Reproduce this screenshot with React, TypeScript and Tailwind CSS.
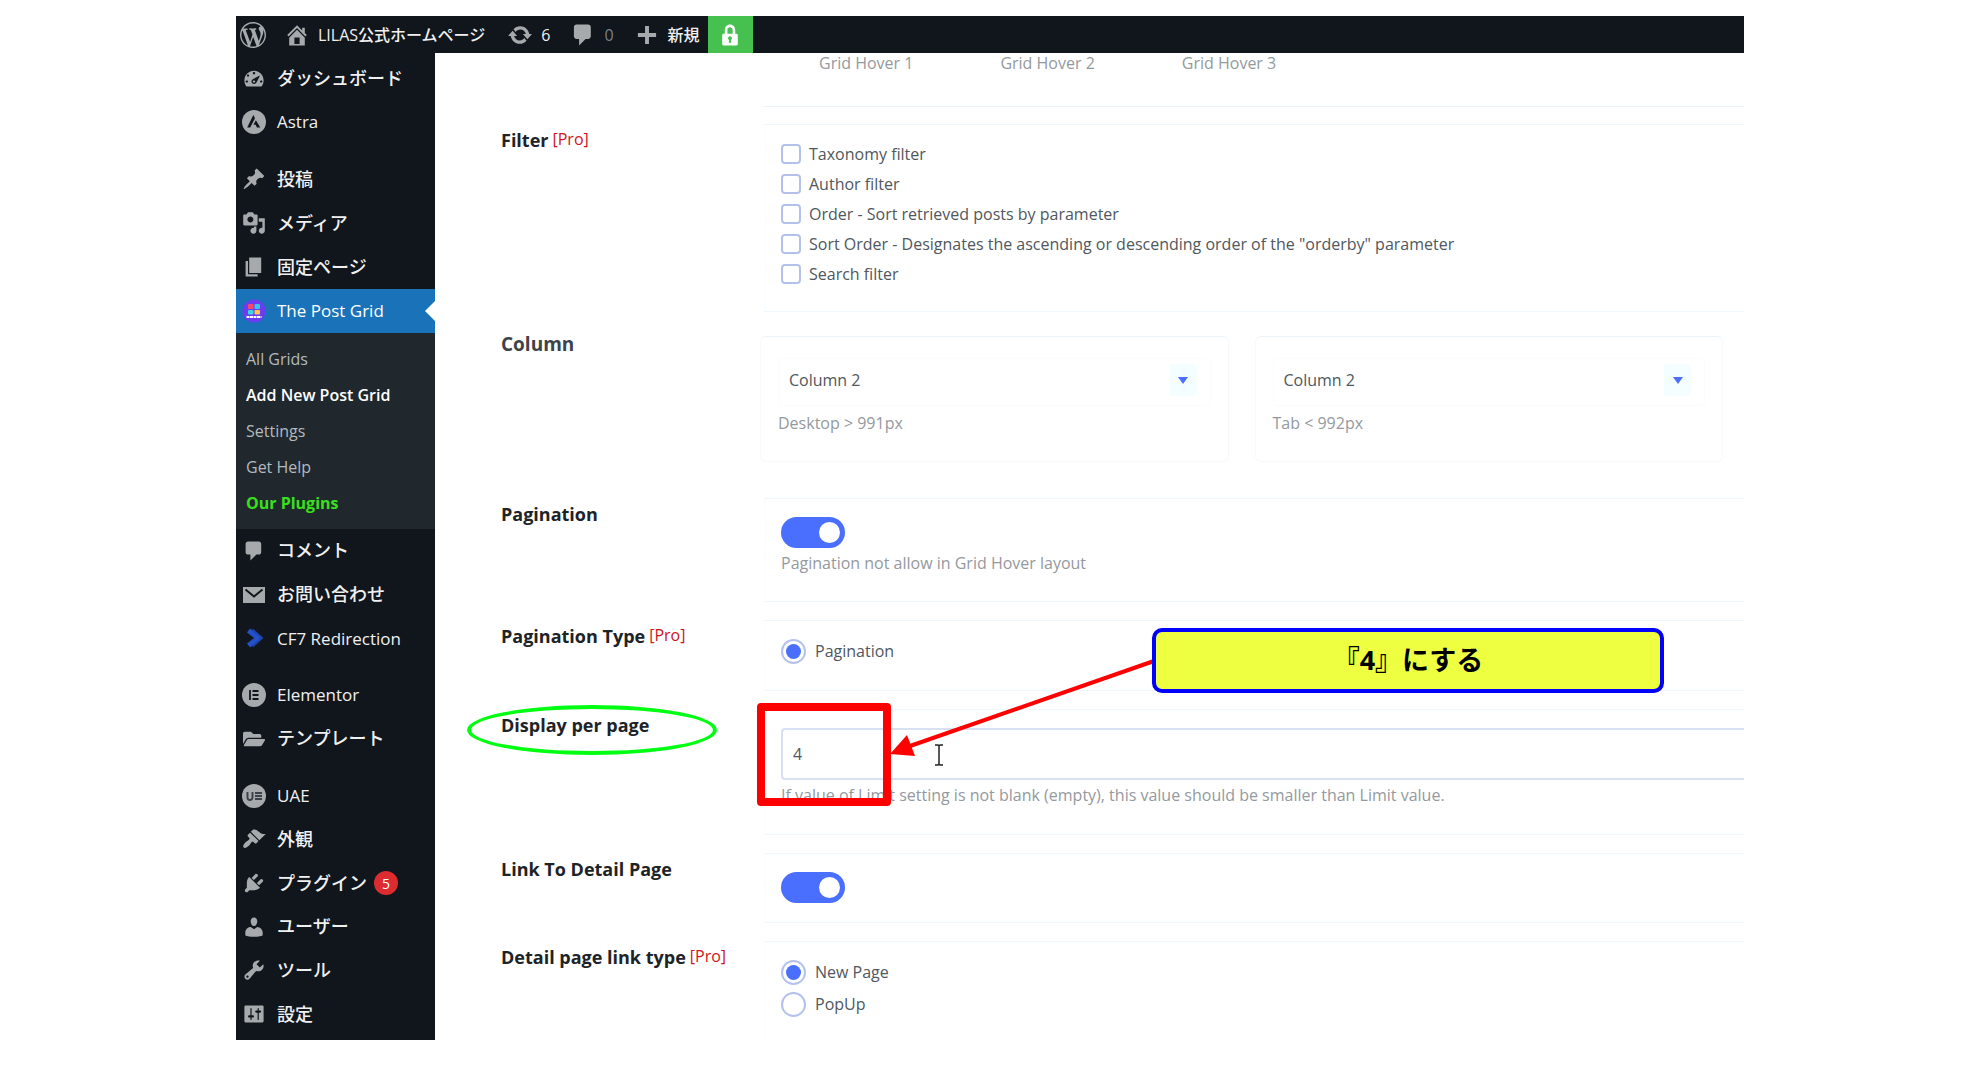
import React from 'react';
import { useState } from 'react';
import { FaFolderOpen } from 'react-icons/fa';

const paths = {
  wordpress: 'M20 10c0-5.51-4.49-10-10-10C4.48 0 0 4.49 0 10c0 5.52 4.48 10 10 10 5.51 0 10-4.48 10-10zM7.78 15.37L4.37 6.22c.55-.02 1.17-.08 1.17-.08.5-.06.44-1.13-.06-1.11 0 0-1.45.11-2.37.11-.18 0-.37 0-.58-.01C4.12 2.69 6.87 1.11 10 1.11c2.33 0 4.45.87 6.05 2.34-.68-.11-1.65.39-1.65 1.58 0 .74.45 1.36.9 2.1.35.61.55 1.36.55 2.46 0 1.49-1.4 5-1.4 5l-3.03-8.37c.54-.02.82-.17.82-.17.5-.05.44-1.25-.06-1.22 0 0-1.44.12-2.38.12-.87 0-2.33-.12-2.33-.12-.5-.03-.56 1.2-.06 1.22l.92.08 1.26 3.41zM17.41 10c.24-.64.74-1.87.43-4.25.7 1.29 1.05 2.71 1.05 4.25 0 3.29-1.73 6.24-4.4 7.78.97-2.59 1.94-5.2 2.92-7.78zM6.1 18.09C3.12 16.65 1.11 13.53 1.11 10c0-1.3.23-2.48.72-3.59C3.25 10.3 4.67 14.2 6.1 18.09zm4.03-6.63l2.58 6.98c-.86.29-1.76.45-2.71.45-.79 0-1.57-.11-2.29-.33.81-2.38 1.62-4.74 2.42-7.1z',
  home: 'M16 8.5l1.53 1.53-1.06 1.06L10 4.6l-6.47 6.49-1.06-1.06L10 2.5l4 4v-2h2v4zm-6-2.46l6 5.99V18H4v-5.97zM12 17v-5H8v5h4z',
  update: 'M10.2 3.28c3.53 0 6.43 2.61 6.92 6h2.08l-3.5 4-3.5-4h2.32c-.45-1.97-2.21-3.45-4.32-3.45-1.45 0-2.73.71-3.54 1.78L4.95 5.66C6.23 4.2 8.11 3.28 10.2 3.28zm-.4 13.44c-3.52 0-6.43-2.61-6.92-6H.8l3.5-4c1.17 1.33 2.33 2.67 3.5 4H5.48c.45 1.97 2.21 3.45 4.32 3.45 1.45 0 2.73-.71 3.54-1.78l1.71 1.95c-1.28 1.46-3.15 2.38-5.25 2.38z',
  comment: 'M5 2h9c1.1 0 2 .9 2 2v7c0 1.1-.9 2-2 2h-2l-5 5v-5H5c-1.1 0-2-.9-2-2V4c0-1.1.9-2 2-2z',
  plus: 'M17 8.5v3h-5.5V17h-3v-5.5H3v-3h5.500V3h3v5.500z',
  lock: 'M14 9h1c.55 0 1 .45 1 1v7c0 .55-.45 1-1 1H5c-.55 0-1-.45-1-1v-7c0-.55.45-1 1-1h1V6c0-2.21 1.79-4 4-4s4 1.79 4 4v3zm-2 0V6c0-1.1-.9-2-2-2s-2 .9-2 2v3h4zm-1 7l-.36-2.150c.51-.24.86-.75.86-1.350 0-.83-.67-1.500-1.500-1.500s-1.500.67-1.500 1.500c0 .6.35 1.110.86 1.350L9 16h2z',
  dashboard: 'M3.76 17h12.48c1.1-1.37 1.76-3.11 1.76-5 0-4.42-3.58-8-8-8s-8 3.58-8 8c0 1.89.66 3.63 1.76 5zM9 6c0-.55.45-1 1-1s1 .45 1 1c0 .56-.45 1-1 1s-1-.44-1-1zM4 8c0-.55.45-1 1-1s1 .45 1 1c0 .56-.45 1-1 1s-1-.44-1-1zm4.52 3.4c.84-.83 6.51-3.5 6.51-3.5s-2.66 5.68-3.49 6.51c-.84.84-2.18.84-3.02 0-.83-.83-.83-2.18 0-3.01zM3 13c0-.55.45-1 1-1s1 .45 1 1c0 .56-.45 1-1 1s-1-.44-1-1zm6 0c0 .55.45 1 1 1s1-.45 1-1c0-.56-.45-1-1-1s-1 .44-1 1zm6 0c0-.55.45-1 1-1s1 .45 1 1c0 .56-.45 1-1 1s-1-.44-1-1z',
  post: 'M10.44 3.02l1.82-1.82 6.36 6.35-1.83 1.82c-1.05-.68-2.48-.57-3.41.36l-.75.75c-.92.93-1.04 2.35-.35 3.41l-1.83 1.82-2.41-2.41-2.8 2.79c-.42.42-3.38 2.71-3.8 2.29s1.86-3.39 2.28-3.81l2.79-2.79L4.1 9.36l1.83-1.82c1.05.69 2.48.57 3.4-.36l.75-.75c.93-.92 1.05-2.35.36-3.41z',
  media: 'M13 11V4c0-.55-.45-1-1-1h-1.67L9 1H5L3.67 3H2c-.55 0-1 .45-1 1v7c0 .55.45 1 1 1h10c.55 0 1-.45 1-1zM7 4.5c1.38 0 2.5 1.12 2.5 2.5S8.38 9.5 7 9.5 4.5 8.38 4.5 7 5.62 4.5 7 4.5zM14 6h5v10.5c0 1.38-1.12 2.5-2.5 2.5S14 17.88 14 16.5s1.12-2.5 2.5-2.5c.17 0 .34.02.5.05V9h-3V6zm-4 8.05V13h2v3.5c0 1.38-1.12 2.5-2.5 2.5S7 17.88 7 16.5 8.12 14 9.5 14c.17 0 .34.02.5.05z',
  page: 'M6 15V2h10v13H6zm-1 1h8v2H3V5h2v11z',
  appearance: 'M14.48 11.06L7.41 3.99l1.5-1.5c.5-.56 2.3-.47 3.51.32 1.21.8 1.43 1.28 2.91 2.1 1.18.64 2.45 1.26 4.45.85zm-.71.71L6.7 4.7 4.93 6.47c-.39.39-.39 1.02 0 1.41l1.06 1.06c.39.39.39 1.03 0 1.42-.6.6-1.43 1.11-2.21 1.69-.35.26-.7.53-1.01.84C1.43 14.23.4 16.08 1.4 17.07c.99 1 2.84-.03 4.18-1.36.31-.31.58-.66.85-1.02.57-.78 1.08-1.61 1.69-2.21.39-.39 1.02-.39 1.41 0l1.06 1.06c.39.39 1.02.39 1.41 0z',
  plugins: 'M13.11 4.36L9.87 7.6 8 5.73l3.24-3.24c.35-.34 1.05-.2 1.56.32.52.51.66 1.21.31 1.55zm-8 1.77l.91-1.12 9.01 9.01-1.19.84c-.71.71-2.63 1.16-3.82 1.16H6.14L4.9 17.26c-.59.59-1.54.59-2.12 0-.59-.58-.59-1.53 0-2.12l1.24-1.24v-3.88c0-1.13.4-3.19 1.09-3.89zm7.26 3.97l3.24-3.24c.34-.35 1.04-.21 1.55.31.52.51.66 1.21.31 1.55l-3.24 3.25z',
  users: 'M10 9.25c-2.27 0-2.73-3.44-2.73-3.44C7 4.02 7.82 2 9.97 2c2.16 0 2.98 2.02 2.71 3.81 0 0-.41 3.44-2.68 3.44zm0 2.57L12.72 10c2.39 0 4.52 2.33 4.52 4.53v2.49s-3.65 1.13-7.24 1.13c-3.65 0-7.24-1.13-7.24-1.13v-2.49c0-2.25 1.94-4.48 4.47-4.48z',
  tools: 'M16.68 9.77c-1.34 1.34-3.3 1.67-4.95.99l-5.41 6.52c-.99.99-2.59.99-3.58 0s-.99-2.59 0-3.57l6.52-5.42c-.68-1.65-.35-3.61.99-4.95 1.28-1.28 3.12-1.62 4.72-1.06l-2.89 2.89 2.82 2.82 2.86-2.87c.53 1.58.18 3.39-1.08 4.65zM3.81 16.21c.4.39 1.04.39 1.43 0 .4-.4.4-1.04 0-1.43-.39-.4-1.03-.4-1.43 0-.39.39-.39 1.03 0 1.43z',
  settings: 'M18 16V4c0-.55-.45-1-1-1H3c-.55 0-1 .45-1 1v12c0 .55.45 1 1 1h14c.55 0 1-.45 1-1zM8 11h1c.55 0 1 .45 1 1s-.45 1-1 1H8v1.5c0 .28-.22.5-.5.5s-.5-.22-.5-.5V13H6c-.55 0-1-.45-1-1s.45-1 1-1h1V5.5c0-.28.22-.5.5-.5s.5.22.5.5V11zm5-2h-1c-.55 0-1-.45-1-1s.45-1 1-1h1V5.5c0-.28.22-.5.5-.5s.5.22.5.5V7h1c.55 0 1 .45 1 1s-.45 1-1 1h-1v5.5c0 .28-.22.5-.5.5s-.5-.22-.5-.5V9z',
};

function DashIcon({name, className = 'size-6'}: {name: keyof typeof paths, className?: string}) {
  return (
    <svg viewBox="0 0 20 20" fill="currentColor" className={className} aria-hidden="true">
      <path fillRule="evenodd" d={paths[name]} />
    </svg>
  );
}

function AstraIcon() {
  return (
    <svg viewBox="0 0 24 24" className="size-6" aria-hidden="true">
      <circle cx="12" cy="12" r="12" fill="currentColor" />
      <path d="M11.300 5 5.200 17.500h3L13 8.300zM13.900 10.200l-2.400 4.600h2.200l1.200 2.700h3.400z" fill="#10161c" />
    </svg>
  );
}

function PostGridIcon() {
  return (
    <svg viewBox="0 0 24 24" className="size-6" aria-hidden="true">
      <circle cx="12" cy="12" r="11.500" fill="#6a3df0" />
      <rect x="6" y="5" width="5.500" height="5" rx="1" fill="#f8486b" />
      <rect x="12.500" y="5" width="5.500" height="5" rx="1" fill="#39c6ea" />
      <rect x="6" y="11" width="5.500" height="4.500" rx="1" fill="#3fd6e4" />
      <rect x="12.500" y="11" width="5.500" height="4.500" rx="1" fill="#ffc35a" />
      <path d="M4.500 18h15" stroke="#fff" strokeWidth="2" strokeDasharray="3 .5" />
    </svg>
  );
}

function MailIcon() {
  return (
    <svg viewBox="0 0 24 24" className="size-6" aria-hidden="true">
      <rect x="1" y="4" width="22" height="16" fill="currentColor" />
      <path d="m3.500 6.500 8.500 7 8.500-7" fill="none" stroke="#10161c" strokeWidth="2" />
    </svg>
  );
}

function RedirectIcon() {
  return (
    <svg viewBox="0 0 24 24" className="size-6" aria-hidden="true">
      <path d="m6.500 4.500 9.500 7.500-9.500 7.500" fill="none" stroke="#2450c8" strokeWidth="5" strokeLinejoin="round" />
      <path d="M10.500 3.500 20 12l-9.500 8.500" fill="none" stroke="#1d43ad" strokeWidth="2" />
    </svg>
  );
}

function ElementorIcon() {
  return (
    <svg viewBox="0 0 24 24" className="size-6" aria-hidden="true">
      <circle cx="12" cy="12" r="12" fill="currentColor" />
      <path d="M8 7v10M10.500 8h6M10.500 12h6M10.500 16h6" stroke="#10161c" strokeWidth="1.800" />
    </svg>
  );
}

function UaeIcon() {
  return (
    <svg viewBox="0 0 24 24" className="size-6" aria-hidden="true">
      <circle cx="12" cy="12" r="12" fill="currentColor" />
      <path d="M5.500 8v5.500a2.500 2.500 0 0 0 5 0V8M13 9h7M13 12h7M13 15h7" fill="none" stroke="#3a4148" strokeWidth="1.900" />
    </svg>
  );
}

type MenuItemProps = {
  icon: React.ReactNode;
  label: string;
  active?: boolean;
  badge?: string;
  grow?: boolean;
}

function MenuItem({icon, label, active, badge, grow}: MenuItemProps) {
  const latin = /^[\x20-\x7e]+$/.test(label);
  return (
    <a
      href="#"
      className={`relative flex items-center gap-[11px] pl-[6px] ${grow ? 'flex-1' : 'h-11'} ${active ? 'bg-[#1a72b8] text-white' : 'text-[#f0f0f1]'}`}
    >
      <span className={`flex size-6 shrink-0 items-center justify-center ${active ? '' : 'text-[#a7aaad]'}`}>{icon}</span>
      <span className={latin ? 'text-[17px]' : 'text-[18px] font-medium'}>{label}</span>
      {badge && (
        <span className="-ml-1 flex size-6 items-center justify-center rounded-full bg-[#dd2c30] text-[14px] text-white">{badge}</span>
      )}
      {active && (
        <span className="absolute right-0 top-3 border-y-10 border-r-10 border-y-transparent border-r-white" />
      )}
    </a>
  );
}

function Sidebar() {
  return (
    <nav className="flex w-[199px] shrink-0 flex-col bg-[#10161c] pb-1 pt-[3px]">
      <MenuItem icon={<DashIcon name="dashboard" />} label="ダッシュボード" />
      <MenuItem icon={<AstraIcon />} label="Astra" />
      <div className="h-[13px]" />
      <MenuItem icon={<DashIcon name="post" />} label="投稿" />
      <MenuItem icon={<DashIcon name="media" />} label="メディア" />
      <MenuItem icon={<DashIcon name="page" />} label="固定ページ" />
      <MenuItem icon={<PostGridIcon />} label="The Post Grid" active />
      <div className="flex flex-col bg-[#20282e] py-2 pl-[10px] text-[16px] leading-9 text-[#b4b9be]">
        <a href="#">All Grids</a>
        <a href="#" className="font-semibold text-white">Add New Post Grid</a>
        <a href="#">Settings</a>
        <a href="#">Get Help</a>
        <a href="#" className="font-bold text-[#39e01c]">Our Plugins</a>
      </div>
      <MenuItem grow icon={<DashIcon name="comment" />} label="コメント" />
      <MenuItem grow icon={<MailIcon />} label="お問い合わせ" />
      <MenuItem grow icon={<RedirectIcon />} label="CF7 Redirection" />
      <div className="h-[13px]" />
      <MenuItem grow icon={<ElementorIcon />} label="Elementor" />
      <MenuItem grow icon={<FaFolderOpen className="size-[22px]" />} label="テンプレート" />
      <div className="h-[13px]" />
      <MenuItem grow icon={<UaeIcon />} label="UAE" />
      <MenuItem grow icon={<DashIcon name="appearance" />} label="外観" />
      <MenuItem grow icon={<DashIcon name="plugins" />} label="プラグイン" badge="5" />
      <MenuItem grow icon={<DashIcon name="users" />} label="ユーザー" />
      <MenuItem grow icon={<DashIcon name="tools" />} label="ツール" />
      <MenuItem grow icon={<DashIcon name="settings" />} label="設定" />
    </nav>
  );
}

function AdminBar() {
  return (
    <header className="flex h-[37px] shrink-0 items-center bg-[#10161c] pl-1 text-[16px] leading-9 text-[#f0f0f1]">
      <a href="#" aria-label="WordPress" className="text-[#a7aaad]"><DashIcon name="wordpress" className="size-[26px]" /></a>
      <a href="#" className="ml-[18px] flex items-center gap-2">
        <DashIcon name="home" className="size-[26px] text-[#a7aaad]" />
        <span className="font-medium">LILAS公式ホームページ</span>
      </a>
      <a href="#" className="ml-[22px] flex items-center gap-2">
        <DashIcon name="update" className="size-[26px] text-[#a7aaad]" />6
      </a>
      <a href="#" className="ml-5 flex items-center gap-2 text-[#7c8186]">
        <DashIcon name="comment" className="size-[26px] text-[#a7aaad]" />0
      </a>
      <a href="#" className="ml-5 flex items-center gap-2">
        <DashIcon name="plus" className="size-[26px] text-[#a7aaad]" />
        <span className="font-medium">新規</span>
      </a>
      <a href="#" aria-label="SSL" className="ml-2 flex h-full w-[45px] items-center justify-center bg-[#46c04e] text-white">
        <DashIcon name="lock" className="size-[26px]" />
      </a>
    </header>
  );
}

type RowProps = {
  label: string;
  pro?: boolean;
  htmlFor?: string;
  children: React.ReactNode;
}

function Row({label, pro, htmlFor, children}: RowProps) {
  return (
    <div className="relative mb-[18px] flex">
      <div className="w-[263px] shrink-0 whitespace-nowrap text-[18px] font-bold leading-8 text-[#1d2327]">
        <label htmlFor={htmlFor}>{label}</label>
        {pro && <sup className="top-[-2px] ml-1 text-[16px] font-normal leading-none text-[#d0141c]">[Pro]</sup>}
      </div>
      <div className="min-w-0 flex-1 border-y border-l border-y-[#eef7fc] border-l-[#f8fcfe] pl-4">{children}</div>
    </div>
  );
}

function Toggle({id}: {id: string}) {
  const [on, setOn] = useState(true);
  return (
    <span className="relative mt-[18px] flex h-[31px] w-16">
      <input
        id={id}
        type="checkbox"
        role="switch"
        checked={on}
        onChange={(e) => setOn(e.target.checked)}
        className="peer h-full w-full appearance-none rounded-full bg-gray-300 checked:bg-[#4a6fff]"
      />
      <span className="pointer-events-none absolute left-1 top-[5px] size-[21px] rounded-full bg-white peer-checked:left-[38px]" />
    </span>
  );
}

function Radio({name, label, checked}: {name: string, label: string, checked?: boolean}) {
  return (
    <label className="flex h-8 items-center gap-[9px] text-[16px] text-[#50575e]">
      <input
        type="radio"
        name={name}
        defaultChecked={checked}
        className="size-[25px] appearance-none rounded-full border-2 border-[#b3c1ec] bg-white bg-clip-content p-[3px] checked:bg-[#4a6fff]"
      />
      {label}
    </label>
  );
}

function ColumnCard({id, hint}: {id: string, hint: string}) {
  return (
    <div className="h-[126px] flex-1 rounded-md border border-[#f6fafd] border-t-[#eaf3fa] px-[17px] pt-[21px]">
      <div className="relative">
        <select
          id={id}
          defaultValue="2"
          className="h-12 w-full appearance-none rounded border border-[#f9fdfe] bg-white pb-1 pl-[10px] text-[16px] text-[#50575e]"
        >
          <option value="1">Column 1</option>
          <option value="2">Column 2</option>
          <option value="3">Column 3</option>
        </select>
        <span className="pointer-events-none absolute right-[14px] top-[6px] flex h-8 w-[27px] items-center justify-center rounded bg-[#f4fdff]">
          <span className="border-x-5 border-t-7 border-x-transparent border-t-[#4a6fff]" />
        </span>
      </div>
      <label htmlFor={id} className="mt-[7px] block text-[16px] leading-5 text-[#94999e]">{hint}</label>
    </div>
  );
}

const filters = [
  'Taxonomy filter',
  'Author filter',
  'Order - Sort retrieved posts by parameter',
  'Sort Order - Designates the ascending or descending order of the "orderby" parameter',
  'Search filter',
];

export default function App() {
  const [perPage, setPerPage] = useState('4');

  return (
    <div className="flex h-screen flex-col bg-white px-[236px] pb-10 pt-4 font-['Open_Sans','Noto_Sans_CJK_JP',sans-serif]">
      <AdminBar />
      <div className="flex min-h-0 flex-1">
        <Sidebar />
        <main className="min-w-0 flex-1 overflow-hidden pl-[66px]">
          <div className="mb-[17px] ml-[263px] flex h-[54px] gap-[87px] border-b border-[#eaf3fb] pl-[55px] text-[16px] leading-5 text-[#94999e]">
            <span>Grid Hover 1</span>
            <span>Grid Hover 2</span>
            <span>Grid Hover 3</span>
          </div>

          <Row label="Filter" pro>
            <div className="flex flex-col pb-[22px] pt-[14px]">
              {filters.map((f) => (
                <label key={f} className="flex h-[30px] items-center gap-2 text-[16px] text-[#50575e]">
                  <input type="checkbox" className="size-5 appearance-none rounded border-2 border-[#b3c1ec] bg-white checked:bg-[#4a6fff]" />
                  {f}
                </label>
              ))}
            </div>
          </Row>

          <div className="mb-9 mt-6 flex">
            <div className="w-[259px] shrink-0 text-[19px] font-bold leading-4 text-[#3c434a]">Column</div>
            <div className="mr-[21px] flex flex-1 gap-[26px]">
              <ColumnCard id="col-desktop" hint="Desktop > 991px" />
              <ColumnCard id="col-tab" hint="Tab < 992px" />
            </div>
          </div>

          <Row label="Pagination" htmlFor="pagination">
            <Toggle id="pagination" />
            <p className="mb-7 mt-[5px] text-[16px] leading-5 text-[#94999e]">Pagination not allow in Grid Hover layout</p>
          </Row>

          <Row label="Pagination Type" pro>
            <div className="pb-[23px] pt-[14px]">
              <Radio name="pagination-type" label="Pagination" checked />
            </div>
          </Row>

          <Row label="Display per page" htmlFor="per-page">
            <input
              id="per-page"
              type="text"
              value={perPage}
              onChange={(e) => setPerPage(e.target.value)}
              className="mt-[18px] block h-[52px] w-full rounded-l border-2 border-r-0 border-[#d8e0f4] bg-white pl-[10px] text-[16px] text-[#50575e] outline-none"
            />
            <p className="mb-[29px] mt-[5px] text-[16px] leading-5 text-[#94999e]">
              If value of Limit setting is not blank (empty), this value should be smaller than Limit value.
            </p>

            {/* annotations drawn over the form */}
            <div className="pointer-events-none absolute left-[-34px] top-[-4px] h-[50px] w-[250px] rounded-[50%] border-4 border-[#00ff10]" />
            <div className="pointer-events-none absolute left-[256px] top-[-6px] h-[103px] w-[134px] rounded-sm border-8 border-[#ff0000]" />
            <svg className="pointer-events-none absolute left-[389px] top-[-52px]" width="266" height="110" viewBox="0 0 266 110" aria-hidden="true">
              <path d="M264 4 20 89" stroke="#ff0000" strokeWidth="4" />
              <path d="m0 97 17-19 8 21z" fill="#ff0000" />
            </svg>
            <svg className="pointer-events-none absolute left-[433px] top-[35px]" width="10" height="22" viewBox="0 0 10 22" aria-hidden="true">
              <path d="M1 1h3l1 1 1-1h3M5 2v18M1 21h3l1-1 1 1h3" fill="none" stroke="#222" strokeWidth="1.500" />
            </svg>
            <div className="pointer-events-none absolute left-[651px] top-[-81px] flex h-[65px] w-[512px] items-center justify-center rounded-[10px] border-4 border-[#0000ff] bg-[#edff40] text-[27px] font-bold text-black">
              『4』にする
            </div>
          </Row>

          <Row label="Link To Detail Page" htmlFor="link-detail">
            <Toggle id="link-detail" />
            <div className="h-[19px]" />
          </Row>

          <Row label="Detail page link type" pro>
            <div className="pb-8 pt-[14px]">
              <Radio name="link-type" label="New Page" checked />
              <Radio name="link-type" label="PopUp" />
            </div>
          </Row>
        </main>
      </div>
    </div>
  );
}
